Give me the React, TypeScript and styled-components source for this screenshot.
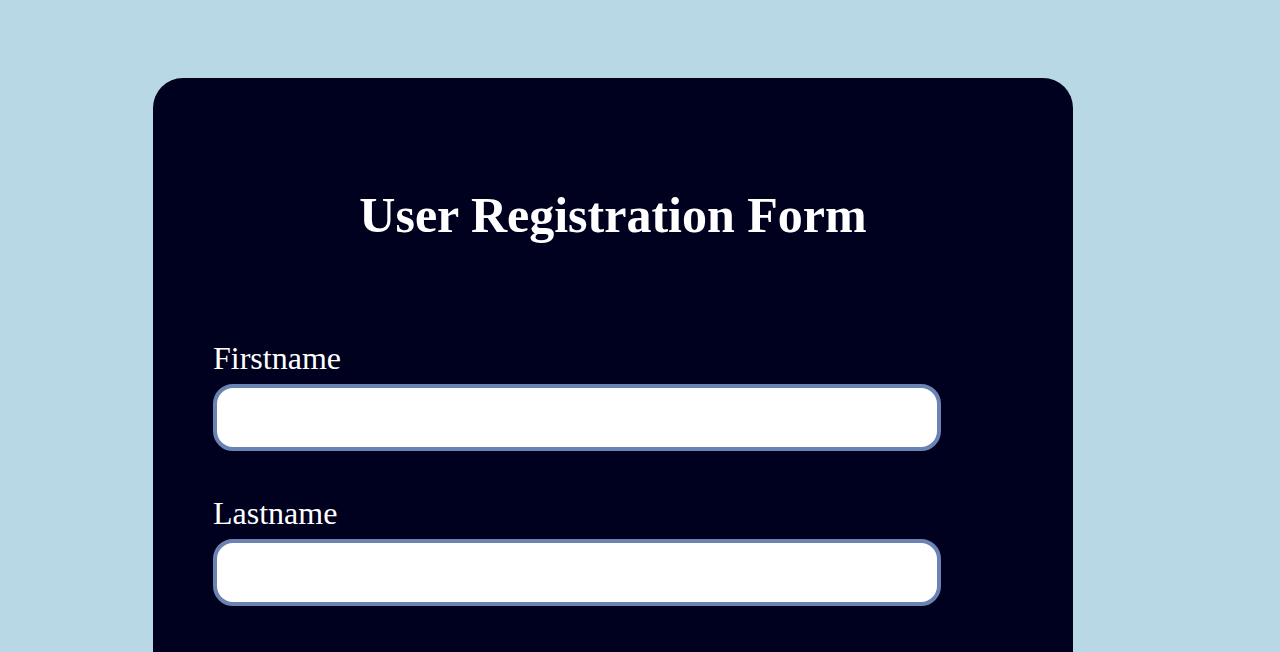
import React from "react";
import styled, { createGlobalStyle } from "styled-components";

const Global = createGlobalStyle`
  html, body { margin: 0; padding: 0; }
  body {
    background: #b7d8e4;
    font-family: "Liberation Serif", "Times New Roman", serif;
  }
`;

const Page = styled.div`
  padding: 78px 0 0 153px;
  height: 652px;
  box-sizing: border-box;
  overflow: hidden;
`;

const Card = styled.div`
  width: 920px;
  min-height: 700px;
  background: #00001f;
  border-radius: 30px;
  padding: 109px 60px 40px;
  box-sizing: border-box;
`;

const Title = styled.h1`
  margin: 0 0 97px;
  color: #ffffff;
  font-size: 50px;
  line-height: 56px;
  font-weight: 700;
  text-align: center;
`;

const Field = styled.div`
  display: flex;
  flex-direction: column;
  gap: 8px;
  margin-bottom: 44px;
`;

const Label = styled.label`
  color: #ffffff;
  font-size: 32px;
  line-height: 36px;
`;

const Input = styled.input`
  width: 728px;
  height: 67px;
  box-sizing: border-box;
  border: 4px solid #6a83b2;
  border-radius: 20px;
  background: #ffffff;
  outline: none;
  font-size: 24px;
  padding: 0 16px;
  font-family: inherit;
`;

export default function App() {
  return (
    <>
      <Global />
      <Page>
        <Card>
          <Title>User Registration Form</Title>
          <Field>
            <Label>Firstname</Label>
            <Input type="text" />
          </Field>
          <Field>
            <Label>Lastname</Label>
            <Input type="text" />
          </Field>
        </Card>
      </Page>
    </>
  );
}
